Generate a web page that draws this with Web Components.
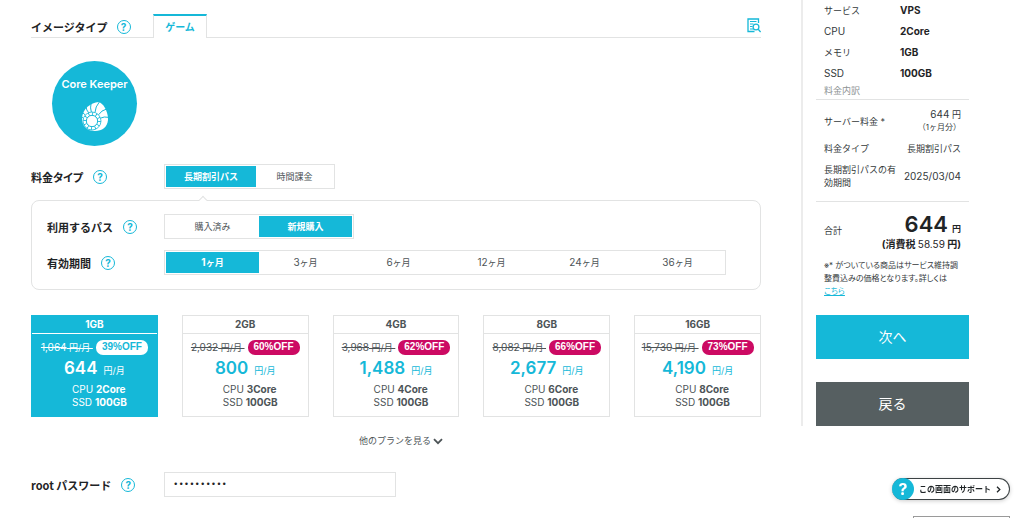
<!DOCTYPE html>
<html lang="ja">
<head>
<meta charset="utf-8">
<title>VPS お申し込み</title>
<style>
html, body { margin: 0; padding: 0; background: #fff; }
body {
  --blue: #15b8d8;
  --pink: #cc0a63;
  --line: #e2e3e3;
  --ink: #1f2426;
  --text: #4d5457;
  --latin: 10px;
  font: 9px/13px Inter, "Noto Sans CJK JP", sans-serif;
  color: var(--text);
}
</style>
</head>
<body>
<order-page></order-page>

<template id="t-order-page">
  <style>
    :host { display: grid; grid-template-columns: minmax(0, 1fr) 223px; align-items: start; }
    main { padding: 0 40px 20px 31px; }
    .row-price { margin-top: 18px; }
    .row-price span { font-feature-settings: "palt"; }
    .row-root { margin-top: 23px; }
    label { cursor: pointer; }
    input {
      box-sizing: border-box; width: 232px; height: 25px; padding: 0 8px;
      border: 1px solid var(--line); background: #fff; color: var(--ink);
      font: 9px/23px "Liberation Mono", monospace; border-radius: 0; outline: none;
    }
    .more { display: flex; justify-content: center; margin: 14px 0 0 10px; }
    .more button {
      display: flex; align-items: center; gap: 2px; height: 18px; padding: 0; border: 0;
      background: none; color: inherit; font: inherit; cursor: pointer;
    }
    .more svg { width: 10px; height: 7px; margin-top: 2px; }
  </style>
  <main>
    <image-tabs heading="イメージタイプ" tab="ゲーム"></image-tabs>
    <game-badge>Core Keeper</game-badge>
    <form-row class="row-price">
      <span slot="label">料金タイプ</span>
      <choice-bar label="料金タイプ" options="長期割引パス,時間課金" selected="0"></choice-bar>
    </form-row>
    <pass-panel>
      <form-row nested>
        <span slot="label">利用するパス</span>
        <choice-bar even label="利用するパス" options="購入済み,新規購入" selected="1"></choice-bar>
      </form-row>
      <form-row nested>
        <span slot="label">有効期間</span>
        <choice-bar even label="有効期間" options="1ヶ月,3ヶ月,6ヶ月,12ヶ月,24ヶ月,36ヶ月" selected="0"></choice-bar>
      </form-row>
    </pass-panel>
    <plan-picker></plan-picker>
    <div class="more"><button type="button">他のプランを見る<svg viewBox="0 0 10 7" aria-hidden="true"><path d="M1 1.200l4 4 4-4" fill="none" stroke="currentColor" stroke-width="1.800"/></svg></button></div>
    <form-row class="row-root">
      <label slot="label" for="root-password">root パスワード</label>
      <input id="root-password" type="password" value="abcdefghij">
    </form-row>
  </main>
  <order-summary></order-summary>
  <support-dock></support-dock>
</template>

<template id="t-help-button">
  <style>
    :host { display: inline-flex; }
    button {
      box-sizing: border-box; width: 14px; height: 14px; padding: 0; border: 1px solid var(--blue);
      border-radius: 50%; background: #fff; color: var(--blue); cursor: pointer;
      font: 700 10px/12px Inter, sans-serif; text-align: center;
    }
  </style>
  <button type="button" aria-label="ヘルプ">?</button>
</template>

<template id="t-image-tabs">
  <style>
    :host { display: flex; align-items: stretch; height: 24px; margin-top: 14px; box-sizing: border-box; border-bottom: 1px solid var(--line); }
    .label { display: flex; align-items: center; gap: 9px; width: 122px; box-sizing: border-box; padding-top: 3px; }
    h2 { margin: 0; font: 700 11px/16px "Noto Sans CJK JP", sans-serif; color: var(--ink); white-space: nowrap; }
    .tab {
      box-sizing: border-box; width: 54px; height: 24px; padding: 0; background: #fff; color: var(--blue);
      border: solid var(--line); border-width: 2px 1px 0; border-top-color: var(--blue);
      font: 700 10px/22px Inter, "Noto Sans CJK JP", sans-serif; cursor: pointer;
    }
    .search { margin-left: auto; align-self: flex-start; display: flex; padding: 0; margin-top: 4px; border: 0; background: none; cursor: pointer; }
    svg { width: 14px; height: 15px; }
  </style>
  <div class="label"><h2></h2><help-button></help-button></div>
  <button class="tab" type="button"></button>
  <button class="search" type="button" aria-label="検索">
    <svg viewBox="0 0 14 15" fill="none" stroke="#15b8d8" stroke-width="1.300" aria-hidden="true">
      <path d="M11.500 5V1H1v12.500h6.500"/><path stroke-width="1" d="M3 3.500h6.500M3 6h3.500M3 8.500h2.500M3 11h3"/>
      <circle cx="9" cy="9" r="2.900"/><path d="M11 11l2.600 3"/>
    </svg>
  </button>
</template>

<template id="t-game-badge">
  <style>
    :host {
      display: flex; flex-direction: column; align-items: center; box-sizing: border-box;
      width: 85px; height: 85px; margin: 23px 0 0 21px; padding-top: 15px; border-radius: 50%;
      background: var(--blue); color: #fff; font: 600 11px/16px Inter, sans-serif; white-space: nowrap;
    }
    svg { width: 26px; height: 29px; margin-top: 10px; }
  </style>
  <slot></slot>
  <svg viewBox="0 0 78 87" aria-hidden="true">
    <path fill="#fff" d="M50 0C64 3 79 30 78 54C76 76 60 87 39 87C16 87 0 74 0 48C2 20 26 2 50 0Z"/>
    <g fill="none" stroke="#15b8d8" stroke-width="3">
      <circle cx="30" cy="57" r="17"/>
      <circle cx="30" cy="57" r="27" stroke-width="2.400"/>
      <circle cx="30" cy="57" r="22" stroke-width="9" stroke-dasharray="2.600 8.920"/>
      <path d="M3 48L-1 45M10 39L2 32M20 32Q13 25 12 14M28 30Q24 18 27 5M39 31Q40 14 52 0M50 38Q58 25 74 21M57 48Q66 43 79 46"/>
    </g>
  </svg>
</template>

<template id="t-form-row">
  <style>
    :host { display: flex; align-items: center; height: 25px; --label: 133px; }
    :host([nested]) { --label: 117px; }
    .label {
      display: flex; align-items: center; gap: 10px; flex: 0 0 var(--label); white-space: nowrap;
      font: 700 11px/16px "Noto Sans CJK JP", sans-serif; color: var(--ink);
    }
  </style>
  <div class="label"><slot name="label"></slot><help-button></help-button></div>
  <slot></slot>
</template>

<template id="t-choice-bar">
  <style>
    :host { display: flex; box-sizing: border-box; height: 25px; padding: 1px; border: 1px solid var(--line); background: #fff; }
    label { display: block; box-sizing: border-box; min-width: 77px; padding: 0 18px; line-height: 21px; text-align: center; white-space: nowrap; cursor: pointer; }
    :host([even]) label { width: 93px; padding: 0; }
    input { appearance: none; position: absolute; margin: 0; width: 0; height: 0; }
    label:has(input:checked) { background: var(--blue); color: #fff; font-weight: 700; }
    .n { font-size: var(--latin); }
  </style>
</template>

<template id="t-pass-panel">
  <style>
    :host {
      display: flex; flex-direction: column; gap: 11px; position: relative; margin-top: 11px;
      padding: 13px 15px 14px; border: 1px solid var(--line); border-radius: 8px;
    }
    .caret {
      position: absolute; left: 168px; top: -4px; width: 6px; height: 6px; box-sizing: border-box;
      border: solid var(--line); border-width: 1px 0 0 1px; background: #fff; transform: rotate(45deg);
    }
  </style>
  <span class="caret"></span>
  <slot></slot>
</template>

<template id="t-plan-picker">
  <style>
    :host { display: grid; grid-template-columns: repeat(5, minmax(0, 1fr)); gap: 24px; margin-top: 25px; }
    label { display: block; box-sizing: border-box; height: 102px; border: 1px solid var(--line); background: #fff; cursor: pointer; }
    input { appearance: none; position: absolute; margin: 0; width: 0; height: 0; }
    .name { border-bottom: 1px solid var(--line); font: 700 10px/17px Inter, sans-serif; text-align: center; }
    .was { display: flex; justify-content: center; gap: 3px; margin-top: 6px; line-height: 14px; white-space: nowrap; }
    s { white-space: pre; }
    .off { padding: 0 6px; border-radius: 7px; background: var(--pink); color: #fff; font: 700 10px/14px "Liberation Sans", sans-serif; }
    .now { display: flex; justify-content: center; align-items: baseline; gap: 6px; height: 20px; margin-top: 3px; line-height: 20px; color: var(--blue); white-space: nowrap; }
    .now b { font-size: 17px; font-weight: 600; }
    .spec { margin: 5px 0 0 40px; font-size: 10px; }
    .n { font-size: var(--latin); }
    label:has(input:checked) { background: var(--blue); border-color: var(--blue); color: #fff; }
    label:has(input:checked) .name { border-color: #fff; }
    label:has(input:checked) .now { color: #fff; }
    label:has(input:checked) .off { background: #fff; color: var(--blue); }
  </style>
</template>

<template id="t-order-summary">
  <style>
    :host { display: block; box-sizing: border-box; border-left: 2px solid #ececec; padding: 0 55px 0 13px; color: #34393b; }
    dl { margin: 0; padding: 0 8px; }
    .spec { display: grid; grid-template-columns: 76px 1fr; line-height: 21px; }
    dt, dd { margin: 0; }
    .spec dd { font-weight: 700; font-size: 10px; color: var(--ink); }
    .n { font-size: var(--latin); }
    h3 { margin: 0; padding: 0 8px 2px; font: 9px/13px Inter, "Noto Sans CJK JP", sans-serif; color: #8d9293; border-bottom: 1px solid var(--line); }
    table { width: 100%; border-collapse: collapse; border-bottom: 1px solid var(--line); }
    th, td { padding: 0; font-weight: 400; text-align: left; vertical-align: middle; }
    th { padding-left: 8px; width: 76px; }
    td { padding-right: 8px; text-align: right; white-space: nowrap; }
    .fee > * { padding-top: 8px; }
    .fee small { display: block; font-size: 8px; }
    .type > * { padding-top: 8px; padding-bottom: 8px; }
    .term > * { padding-bottom: 12px; }
    .total { display: flex; justify-content: space-between; align-items: center; padding: 8px 8px 0; }
    .total p { margin: 0; text-align: right; font-weight: 700; color: var(--ink); }
    .total .sum { display: flex; justify-content: flex-end; align-items: baseline; gap: 4px; height: 28px; line-height: 28px; }
    .sum b { font-size: 22px; font-weight: 600; }
    .total .tax { font-size: 10px; }
    .tax .n { font-weight: 400; }
    .note { margin: 8px 7px 17px 8px; font-size: 8px; line-height: 13px; font-feature-settings: "palt"; }
    a { color: var(--blue); }
    .btn { display: block; width: 100%; height: 44px; padding: 0; border: 0; background: var(--blue); color: #fff; font: 14px/44px Inter, "Noto Sans CJK JP", sans-serif; cursor: pointer; }
    .back { margin-top: 23px; background: #565f61; }
  </style>
  <dl class="spec">
    <dt>サービス</dt><dd>VPS</dd>
    <dt class="n">CPU</dt><dd>2Core</dd>
    <dt>メモリ</dt><dd>1GB</dd>
    <dt class="n">SSD</dt><dd>100GB</dd>
  </dl>
  <h3>料金内訳</h3>
  <table>
    <tr class="fee"><th>サーバー料金 *</th><td><span class="n">644</span> 円<small>（1ヶ月分）</small></td></tr>
    <tr class="type"><th>料金タイプ</th><td>長期割引パス</td></tr>
    <tr class="term"><th>長期割引パスの有効期間</th><td class="n">2025/03/04</td></tr>
  </table>
  <div class="total">
    <span>合計</span>
    <div>
      <p class="sum"><b>644</b>円</p>
      <p class="tax">(消費税 <span class="n">58.59</span> 円)</p>
    </div>
  </div>
  <p class="note">※* がついている商品はサービス維持調整費込みの価格となります。詳しくは<br><a href="#fee">こちら</a></p>
  <button class="btn" type="button">次へ</button>
  <button class="btn back" type="button">戻る</button>
</template>

<template id="t-support-dock">
  <style>
    :host { position: fixed; right: 14px; bottom: 0; display: flex; flex-direction: column; align-items: flex-end; gap: 16px; }
    a {
      display: flex; align-items: center; box-sizing: border-box; height: 22px; padding-right: 8px; gap: 5px;
      border: 1px solid #3c4244; border-left: 0; border-radius: 11px; background: #fff; color: var(--ink);
      font: 700 8px/20px Inter, "Noto Sans CJK JP", sans-serif; text-decoration: none; box-shadow: 0 1px 4px rgba(0, 0, 0, .2);
    }
    .q { width: 22px; height: 22px; border-radius: 50%; background: var(--blue); color: #fff; font: 700 16px/22px Inter, sans-serif; text-align: center; }
    svg { width: 5px; height: 7px; }
    .tray { box-sizing: border-box; width: 97px; height: 2px; border: solid #9a9a9a; border-width: 1px 1px 0; }
  </style>
  <a href="#support"><span class="q">?</span>この画面のサポート<svg viewBox="0 0 5 7" aria-hidden="true"><path d="M1 .8l2.800 2.700L1 6.200" fill="none" stroke="currentColor" stroke-width="1.300"/></svg></a>
  <div class="tray"></div>
</template>

<script>
class TemplateElement extends HTMLElement {
  constructor() {
    super();
    const root = this.attachShadow({ mode: "open" });
    root.append(document.getElementById("t-" + this.localName).content.cloneNode(true));
  }
}
// Wraps runs of digits so they take the Latin text size.
const digits = (text) => text.replace(/[\d,]+/g, (m) => `<span class="n">${m}</span>`);

customElements.define("help-button", class extends TemplateElement {});
customElements.define("game-badge", class extends TemplateElement {});
customElements.define("form-row", class extends TemplateElement {});
customElements.define("pass-panel", class extends TemplateElement {});
customElements.define("support-dock", class extends TemplateElement {});
customElements.define("order-summary", class extends TemplateElement {});

customElements.define("image-tabs", class extends TemplateElement {
  connectedCallback() {
    this.shadowRoot.querySelector("h2").textContent = this.getAttribute("heading");
    this.shadowRoot.querySelector(".tab").textContent = this.getAttribute("tab");
  }
});

customElements.define("choice-bar", class extends TemplateElement {
  connectedCallback() {
    this.setAttribute("role", "radiogroup");
    this.setAttribute("aria-label", this.getAttribute("label"));
    const selected = Number(this.getAttribute("selected"));
    this.getAttribute("options").split(",").forEach((text, i) => {
      const label = document.createElement("label");
      label.innerHTML = `<input type="radio" name="choice"${i === selected ? " checked" : ""}>${digits(text)}`;
      this.shadowRoot.append(label);
    });
  }
});

const PLANS = [
  ["1GB", "1,064", "39%", "644", "2Core"],
  ["2GB", "2,032", "60%", "800", "3Core"],
  ["4GB", "3,968", "62%", "1,488", "4Core"],
  ["8GB", "8,082", "66%", "2,677", "6Core"],
  ["16GB", "15,730", "73%", "4,190", "8Core"],
];
customElements.define("plan-picker", class extends TemplateElement {
  connectedCallback() {
    PLANS.forEach(([name, was, off, now, cpu], i) => {
      const label = document.createElement("label");
      label.innerHTML = `<input type="radio" name="plan"${i === 0 ? " checked" : ""}>
        <div class="name">${name}</div>
        <div class="was"><s>${digits(was)} 円/月 </s><span class="off">${off}OFF</span></div>
        <div class="now"><b>${now}</b><span>円/月</span></div>
        <div class="spec">CPU <b>${cpu}</b><br>SSD <b>100GB</b></div>`;
      this.shadowRoot.append(label);
    });
  }
});

customElements.define("order-page", class extends TemplateElement {});
</script>
</body>
</html>
